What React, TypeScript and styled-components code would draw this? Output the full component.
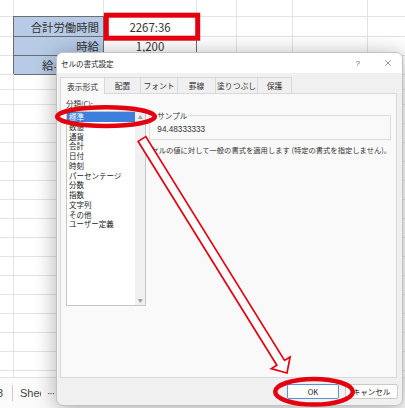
import React from 'react'
import styled, { createGlobalStyle } from 'styled-components'
import { X } from 'lucide-react'

const GlobalStyle = createGlobalStyle`
  html, body {
    margin: 0;
    padding: 0;
    background: #fff;
  }
  body {
    font-family: "Noto Sans CJK JP", "Noto Sans", sans-serif;
    overflow: hidden;
  }
`

const COLS = [14, 90, 93, 40, 56, 75, 60]
const ROWS = [17, 20, 19, 19, 15, 15, ...Array(16).fill(19)]

type CellKind = 'plain' | 'head' | 'value'
type CellData = { text: string; kind: CellKind }

const CELLS: Record<string, CellData> = {
  '1-1': { text: '合計労働時間', kind: 'head' },
  '1-2': { text: '2267:36', kind: 'value' },
  '2-1': { text: '時給', kind: 'head' },
  '2-2': { text: '1,200', kind: 'value' },
  '3-1': { text: '給与支給額', kind: 'head' },
  '3-2': { text: '', kind: 'value' },
}

const CATEGORIES = [
  '標準',
  '数値',
  '通貨',
  '会計',
  '日付',
  '時刻',
  'パーセンテージ',
  '分数',
  '指数',
  '文字列',
  'その他',
  'ユーザー定義',
]

const TABS = [
  { label: '表示形式', width: 45 },
  { label: '配置', width: 37 },
  { label: 'フォント', width: 38 },
  { label: '罫線', width: 39 },
  { label: '塗りつぶし', width: 43 },
  { label: '保護', width: 35 },
]

export default function App() {
  return (
    <Page>
      <GlobalStyle />
      <SheetGrid>
        {ROWS.map((_, r) =>
          COLS.map((__, c) => {
            const cell = CELLS[`${r}-${c}`]
            return (
              <Cell key={`${r}-${c}`} $kind={cell ? cell.kind : 'plain'}>
                {cell?.text}
              </Cell>
            )
          })
        )}
      </SheetGrid>
      <SheetTabs>
        <TabTail>3</TabTail>
        <TabDivider />
        <ClippedName>Sheet4</ClippedName>
        <MoreDots>···</MoreDots>
      </SheetTabs>

      <Dialog>
        <TitleBar>
          <Title>セルの書式設定</Title>
          <HelpGlyph>?</HelpGlyph>
          <CloseGlyph>
            <X size={10} strokeWidth={1.3} />
          </CloseGlyph>
        </TitleBar>
        <Body>
          <TabStrip>
            {TABS.map((t, i) => (
              <Tab key={t.label} $active={i === 0} $w={t.width}>
                {t.label}
              </Tab>
            ))}
          </TabStrip>
          <Panel>
            <LeftColumn>
              <SmallLabel>分類(C):</SmallLabel>
              <ListBox>
                <Items>
                  {CATEGORIES.map((name, i) => (
                    <Item key={name} $selected={i === 0}>
                      {name}
                    </Item>
                  ))}
                </Items>
                <ScrollTrack>
                  <ScrollArrow>▲</ScrollArrow>
                  <ScrollArrow>▼</ScrollArrow>
                </ScrollTrack>
              </ListBox>
            </LeftColumn>
            <RightColumn>
              <SampleBox>
                <SampleLegend>サンプル</SampleLegend>
                <SampleValue>94.48333333</SampleValue>
              </SampleBox>
              <Description>
                セルの値に対して一般の書式を適用します (特定の書式を指定しません)。
              </Description>
            </RightColumn>
          </Panel>
          <Footer>
            <Button $primary>OK</Button>
            <Button>キャンセル</Button>
          </Footer>
        </Body>
      </Dialog>

      <Annotations viewBox='0 0 405 408' width={405} height={408}>
        <rect
          x={106.3}
          y={15.2}
          width={91.4}
          height={23}
          fill='none'
          stroke='#e4000f'
          strokeWidth={5}
        />
        <ellipse
          cx={106}
          cy={116.6}
          rx={48.8}
          ry={9.4}
          fill='none'
          stroke='#e4000f'
          strokeWidth={4.5}
        />
        <polygon
          points='138.2,141.4 145.8,136.6 284.5,360.4 290.1,357 287,373 271.3,368.6 276.9,365.2'
          fill='#fff'
          stroke='#e4000f'
          strokeWidth={1.7}
          strokeLinejoin='miter'
        />
        <ellipse
          cx={314}
          cy={391.8}
          rx={38.8}
          ry={12.8}
          fill='none'
          stroke='#e4000f'
          strokeWidth={4.5}
        />
      </Annotations>
    </Page>
  )
}

const Page = styled.div`
  position: relative;
  width: 405px;
  height: 408px;
  display: flex;
  flex-direction: column;
  overflow: hidden;
  background: #fff;
`

const SheetGrid = styled.div`
  flex: 1;
  display: grid;
  grid-template-columns: ${COLS.map((w) => `${w}px`).join(' ')};
  grid-template-rows: ${ROWS.map((h) => `${h}px`).join(' ')};
  align-content: start;
  overflow: hidden;
`

const Cell = styled.div<{ $kind: CellKind }>`
  box-sizing: border-box;
  display: flex;
  align-items: center;
  justify-content: ${(p) => (p.$kind === 'head' ? 'flex-end' : 'center')};
  padding-right: ${(p) => (p.$kind === 'head' ? '4px' : '0')};
  font-size: 11.4px;
  color: #333;
  white-space: nowrap;
  overflow: hidden;
  background: ${(p) => (p.$kind === 'head' ? '#b7cbe7' : '#fff')};
  border-right: 1px solid ${(p) => (p.$kind === 'plain' ? '#e3e3e3' : '#6d6d6d')};
  border-bottom: 1px solid ${(p) => (p.$kind === 'plain' ? '#e3e3e3' : '#6d6d6d')};
  box-shadow: ${(p) => (p.$kind === 'plain' ? 'none' : '-1px -1px 0 #6d6d6d')};
`

const SheetTabs = styled.div`
  height: 30px;
  flex-shrink: 0;
  display: flex;
  align-items: center;
  background: #fbfbfb;
  border-top: 1px solid #e3e3e3;
  font-family: "Liberation Sans", Arial, sans-serif;
  font-size: 11px;
  color: #444;
`

const TabTail = styled.span`
  margin-left: -3px;
  width: 7px;
`

const TabDivider = styled.span`
  width: 1px;
  height: 16px;
  background: #cfcfcf;
  margin: 0 7px 0 8px;
`

const ClippedName = styled.span`
  width: 21px;
  overflow: hidden;
  white-space: nowrap;
`

const MoreDots = styled.span`
  margin-left: 6px;
  font-size: 10px;
  letter-spacing: -1px;
`

const Dialog = styled.div`
  position: absolute;
  left: 56px;
  top: 52px;
  width: 347px;
  height: 354px;
  box-sizing: border-box;
  border: 1px solid #c2c2c2;
  border-radius: 7px;
  background: #f0f0f0;
  box-shadow: 0 3px 22px rgba(0, 0, 0, 0.32);
  display: flex;
  flex-direction: column;
  overflow: hidden;
`

const TitleBar = styled.div`
  height: 20px;
  flex-shrink: 0;
  display: flex;
  align-items: center;
  padding: 0 9px 0 4px;
  background: #fff;
  color: #222;
`

const Title = styled.div`
  flex: 1;
  font-size: 7.5px;
`

const HelpGlyph = styled.span`
  font-family: "Liberation Sans", Arial, sans-serif;
  font-size: 8px;
  color: #666;
  margin-right: 23px;
`

const CloseGlyph = styled.span`
  display: flex;
  color: #444;
`

const Body = styled.div`
  flex: 1;
  display: flex;
  flex-direction: column;
  padding: 4px 4px 0 3px;
`

const TabStrip = styled.div`
  display: flex;
  height: 16px;
  flex-shrink: 0;
  position: relative;
  z-index: 1;
`

const Tab = styled.div<{ $active?: boolean; $w: number }>`
  box-sizing: border-box;
  width: ${(p) => p.$w}px;
  height: ${(p) => (p.$active ? 17 : 16)}px;
  margin-right: -1px;
  display: flex;
  align-items: center;
  justify-content: center;
  font-size: 7.8px;
  color: #333;
  background: ${(p) => (p.$active ? '#f9f9f9' : '#f0f0f0')};
  border: 1px solid #d9d9d9;
  border-bottom: none;
`

const Panel = styled.div`
  flex: 1;
  display: flex;
  box-sizing: border-box;
  margin-right: 1px;
  padding: 5px 5px 0 5px;
  background: #f9f9f9;
  border: 1px solid #d9d9d9;
`

const LeftColumn = styled.div`
  display: flex;
  flex-direction: column;
  width: 86px;
`

const SmallLabel = styled.div`
  font-size: 7.5px;
  line-height: 9px;
  color: #333;
  margin-bottom: 3px;
`

const ListBox = styled.div`
  box-sizing: border-box;
  height: 195px;
  display: flex;
  background: #fff;
  border: 1px solid #c6c6c6;
`

const Items = styled.div`
  flex: 1;
`

const Item = styled.div<{ $selected?: boolean }>`
  height: 9.75px;
  line-height: 9.75px;
  font-size: 7.5px;
  padding-left: 2px;
  white-space: nowrap;
  color: ${(p) => (p.$selected ? '#fff' : '#222')};
  background: ${(p) => (p.$selected ? '#3d7fdc' : 'transparent')};
`

const ScrollTrack = styled.div`
  width: 10px;
  display: flex;
  flex-direction: column;
  justify-content: space-between;
  align-items: center;
  background: #f0f0f0;
  padding: 2px 0;
`

const ScrollArrow = styled.span`
  font-size: 5px;
  line-height: 6px;
  color: #a0a0a0;
`

const RightColumn = styled.div`
  flex: 1;
  padding: 12px 0 0 3px;
  display: flex;
  flex-direction: column;
`

const SampleBox = styled.fieldset`
  margin: 0;
  padding: 0 7px 3px;
  border: 1px solid #dcdcdc;
  min-width: 0;
`

const SampleLegend = styled.legend`
  padding: 0 1px 0 0;
  font-size: 7.5px;
  line-height: 9px;
  color: #333;
`

const SampleValue = styled.div`
  font-family: "Liberation Sans", Arial, sans-serif;
  font-size: 8.2px;
  line-height: 12px;
  padding-top: 4px;
  color: #333;
`

const Description = styled.div`
  margin: 5px 0 0 2px;
  font-size: 7.3px;
  line-height: 10px;
  color: #333;
  white-space: nowrap;
`

const Footer = styled.div`
  height: 27px;
  flex-shrink: 0;
  display: flex;
  justify-content: flex-end;
  align-items: center;
  gap: 6px;
`

const Button = styled.div<{ $primary?: boolean }>`
  box-sizing: border-box;
  width: ${(p) => (p.$primary ? 52 : 53)}px;
  height: 15px;
  display: flex;
  align-items: center;
  justify-content: center;
  font-size: 7.5px;
  color: #222;
  background: #fdfdfd;
  border: 1px solid ${(p) => (p.$primary ? '#5b93d9' : '#cbcbcb')};
  border-radius: 2px;
`

const Annotations = styled.svg`
  position: absolute;
  left: 0;
  top: 0;
  pointer-events: none;
  z-index: 10;
`
